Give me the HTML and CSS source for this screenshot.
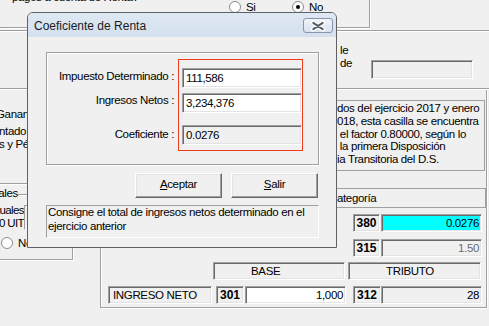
FILE: index.html
```html
<!DOCTYPE html>
<html lang="es">
<head>
<meta charset="utf-8">
<title>Coeficiente de Renta</title>
<link rel="stylesheet" href="styles.css">
</head>
<body>
<div class="screen">
  <div class="q-group">
    <p class="q-text">pagos a cuenta de Renta?</p>
    <label class="radio r-si"><svg class="rb" width="12" height="12" viewBox="0 0 12 12"><circle cx="6" cy="6" r="5.5" class="rb-ring"/></svg><span>Si</span></label>
    <label class="radio r-no"><svg class="rb" width="12" height="12" viewBox="0 0 12 12"><circle cx="6" cy="6" r="5.5" class="rb-ring"/><circle cx="6" cy="6" r="2" class="rb-dot"/></svg><span>No</span></label>
  </div>

  <div class="panel-a">
    <div class="pa-label">le<br>de</div>
    <div class="pa-field sunk"></div>
  </div>

  <div class="lower">
    <div class="left-col">
      <p class="lc-first">Ganancias</p>
      <p class="lc-second">ntado<br>s y Pérdidas</p>
      <div class="lc-sep"></div>
      <div class="lc-group">
        <div class="lc-cap"><span>Datos Adicionales</span></div>
        <div class="lc-row">
          <div class="lc-lbl"><span>Ventas anuales</span><span>mayores a 1700 UIT</span></div>
          <div class="lc-field"></div>
        </div>
        <label class="lc-radio"><svg class="rb" width="12" height="12" viewBox="0 0 12 12"><circle cx="6" cy="6" r="5.5" class="rb-ring"/></svg><span>No</span></label>
      </div>
    </div>

    <div class="cat-group">
      <div class="info-box">dos del ejercicio 2017 y enero<br>018, esta casilla se encuentra<br>&nbsp;el factor 0.80000, según lo<br>&nbsp;la primera Disposición<br>ia Transitoria del D.S.</div>
      <div class="cat-head">Categoría</div>
      <div class="cg-row r1">
        <div class="code sunk c-w27">380</div>
        <div class="val sunk v-cyan">0.0276</div>
      </div>
      <div class="cg-row r2">
        <div class="code sunk c-w27">315</div>
        <div class="val sunk v-dis">1.50</div>
      </div>
      <div class="cg-row r3">
        <div class="colhead sunk h-base">BASE</div>
        <div class="colhead sunk h-trib">TRIBUTO</div>
      </div>
      <div class="cg-row r4">
        <div class="rowlbl sunk">INGRESO NETO</div>
        <div class="code sunk c-301">301</div>
        <div class="val sunk v-white">1,000</div>
        <div class="code sunk c-312">312</div>
        <div class="val sunk v-gray">28</div>
      </div>
    </div>
  </div>

  <div class="dialog">
    <div class="dlg-title">
      <h1>Coeficiente de Renta</h1>
      <div class="dlg-close">
        <svg width="28" height="13" viewBox="0 0 28 13"><path d="M9 3.5 L19 10.5 M19 3.5 L9 10.5" stroke="#ffffff" stroke-width="4.2" stroke-linecap="round" fill="none"/><path d="M9.3 3.8 L18.7 10.2 M18.7 3.8 L9.3 10.2" stroke="#565c66" stroke-width="2" stroke-linecap="round" fill="none"/></svg>
      </div>
    </div>
    <div class="dlg-body">
      <div class="dlg-panel">
        <div class="dlg-labels">
          <span class="l1">Impuesto Determinado :</span>
          <span class="l2">Ingresos Netos :</span>
          <span class="l3">Coeficiente :</span>
        </div>
        <div class="dlg-red">
          <div class="dlg-input sunk">111,586</div>
          <div class="dlg-input sunk i2">3,234,376</div>
          <div class="dlg-input sunk i3">0.0276</div>
        </div>
      </div>
      <div class="dlg-buttons">
        <div class="btn"><u>A</u>ceptar</div>
        <div class="btn"><u>S</u>alir</div>
      </div>
      <div class="dlg-help">Consigne el total de ingresos netos determinado en el<br>ejercicio anterior</div>
    </div>
  </div>
</div>
</body>
</html>
```

FILE: styles.css
```css
* { box-sizing: border-box; }
html, body { margin: 0; padding: 0; }
body {
  background: #f0f0f0;
  font-family: "Liberation Sans", Arial, sans-serif;
  font-size: 11.5px;
  letter-spacing: -0.35px;
  color: #000;
}
p { margin: 0; }

.screen {
  position: relative;
  width: 489px;
  height: 326px;
  overflow: hidden;
  background: #f0f0f0;
}

/* shared classic sunken field edge */
.sunk {
  border: 1px solid;
  border-color: #a0a0a0 #ffffff #ffffff #a0a0a0;
  box-shadow: inset 1px 1px 0 #696969, inset -1px -1px 0 #e3e3e3;
}

.rb-ring { fill: #ffffff; stroke: #8a8a8a; stroke-width: 1; }
.rb-dot { fill: #000; }

/* top group */
.q-group {
  display: flex;
  align-items: flex-start;
  width: 370px;
  height: 28px;
  border-right: 1px solid #a0a0a0;
  border-bottom: 1px solid #a0a0a0;
  box-shadow: 1px 1px 0 #fff;
}
.q-text {
  flex: none;
  width: 229px;
  margin-top: -10px;
  padding-left: 12px;
  line-height: 15px;
  white-space: nowrap;
}
.radio {
  flex: none;
  display: flex;
  align-items: center;
  gap: 5px;
  height: 12px;
  margin-top: 1px;
  line-height: 15px;
  white-space: nowrap;
}
.r-si { width: 63px; }

/* second band */
.panel-a {
  display: flex;
  align-items: flex-start;
  margin-top: 2px;
  height: 60px;
  border-top: 1px solid #a0a0a0;
  border-bottom: 1px solid #fff;
  box-shadow: inset 0 1px 0 #fff, inset 0 -1px 0 #a0a0a0;
}
.pa-label {
  flex: none;
  margin: 13px 0 0 340px;
  width: 31px;
  line-height: 13px;
}
.pa-field {
  flex: none;
  margin-top: 29px;
  width: 102px;
  height: 19px;
  background: #f0f0f0;
}

/* lower area */
.lower {
  display: flex;
  align-items: flex-start;
  height: 236px;
}
.left-col {
  flex: none;
  width: 100px;
}
.lc-first {
  margin: 18px 0 0 -4px;
  line-height: 13px;
  white-space: nowrap;
}
.lc-second {
  margin: 4px 0 0 -1px;
  line-height: 13px;
  white-space: nowrap;
}
.lc-sep {
  margin-top: 32px;
  height: 2px;
  border-top: 1px solid #a0a0a0;
  border-bottom: 1px solid #fff;
}
.lc-group {
  margin: 9px 0 0 -30px;
  width: 103px;
  height: 66px;
  border: 1px solid #a0a0a0;
  box-shadow: inset 1px 1px 0 #fff, 1px 1px 0 #fff;
}
.lc-cap {
  display: flex;
  justify-content: flex-end;
  width: 47px;
  margin-top: -9px;
  line-height: 15px;
  background: #f0f0f0;
  white-space: nowrap;
}
.lc-row {
  display: flex;
  align-items: flex-start;
  margin-top: 3px;
}
.lc-lbl {
  flex: none;
  display: flex;
  flex-direction: column;
  align-items: flex-end;
  width: 53px;
  line-height: 13px;
  letter-spacing: -0.6px;
  white-space: nowrap;
}
.lc-field {
  flex: none;
  margin-top: 1px;
  width: 44px;
  height: 25px;
  border: 1px solid;
  border-color: #a0a0a0 #fff #fff #a0a0a0;
}
.lc-radio {
  display: flex;
  align-items: center;
  gap: 5px;
  height: 12px;
  margin: 7px 0 0 30px;
  line-height: 15px;
  white-space: nowrap;
}

.cat-group {
  flex: none;
  width: 387px;
  height: 218px;
  border: 1px solid #a0a0a0;
  border-top: 0;
  box-shadow: inset 1px 0 0 #fff, 1px 1px 0 #fff;
}
.info-box {
  margin: 10px 0 0 229px;
  width: 155px;
  height: 71px;
  border: 1px solid #a0a0a0;
  padding: 1px 0 0 6px;
  line-height: 12.75px;
  white-space: nowrap;
  overflow: hidden;
}
.cat-head {
  margin: 17px 0 0 229px;
  width: 156px;
  height: 20px;
  border: 1px solid #a0a0a0;
  line-height: 18px;
  text-indent: -2px;
  white-space: nowrap;
  overflow: hidden;
}
.cg-row {
  display: flex;
  align-items: flex-start;
  height: 18px;
}
.r1 { margin-top: 6px; }
.r2 { margin-top: 7px; }
.r3 { margin-top: 5px; }
.r4 { margin-top: 6px; }

.cg-row > div {
  flex: none;
  height: 18px;
  line-height: 16px;
  white-space: nowrap;
  overflow: hidden;
}
.code {
  font-size: 12px;
  font-weight: bold;
  letter-spacing: 0;
  text-align: center;
  background: #f0f0f0;
}
.c-w27 { width: 27px; margin-left: 252px; }
.c-301 { width: 28px; margin-left: 4px; }
.c-312 { width: 28px; margin-left: 7px; }
.val {
  width: 101px;
  text-align: right;
  padding-right: 2px;
}
.c-w27 + .val { margin-left: 1px; }
.v-cyan { background: #00ffff; }
.v-dis { background: #f0f0f0; color: #6d6d6d; }
.v-white { background: #fff; margin-left: 1px; }
.v-gray { background: #f0f0f0; }
.colhead {
  padding-left: 37px;
  background: #f0f0f0;
}
.h-base { width: 132px; margin-left: 112px; }
.h-trib { width: 133px; margin-left: 3px; }
.rowlbl {
  width: 104px;
  margin-left: 7px;
  padding-left: 4px;
  background: #f0f0f0;
}

/* dialog overlay */
.dialog {
  position: absolute;
  left: 27px;
  top: 12px;
  width: 310px;
  height: 236px;
  display: flex;
  flex-direction: column;
  border: 1px solid #5e6166;
  border-radius: 6px 6px 0 0;
  background: #f0f0f0;
}
.dlg-title {
  flex: none;
  display: flex;
  align-items: flex-start;
  height: 24px;
  border-radius: 5px 5px 0 0;
  background: linear-gradient(#dfe8f4, #d4e0ee);
}
.dlg-title h1 {
  flex: 1;
  margin: 0;
  padding: 3px 0 0 6px;
  font-size: 12px;
  letter-spacing: 0;
  line-height: 21px;
  font-weight: normal;
  color: #1b1b1b;
}
.dlg-close {
  flex: none;
  display: flex;
  align-items: center;
  justify-content: center;
  margin: 5px 3px 0 0;
  width: 30px;
  height: 15px;
  border: 1px solid #8695ab;
  border-radius: 3px;
  background: linear-gradient(#f1f4f9, #d9e2ee);
}
.dlg-body {
  padding: 15px 0 0 18px;
}
.dlg-panel {
  display: flex;
  align-items: flex-start;
  width: 273px;
  height: 113px;
  border: 1px solid #a0a0a0;
  box-shadow: inset 1px 1px 0 #fff, 1px 1px 0 #fff;
}
.dlg-labels {
  flex: none;
  display: flex;
  flex-direction: column;
  align-items: flex-end;
  width: 127px;
  margin-top: 16px;
  line-height: 15px;
  white-space: nowrap;
}
.dlg-labels .l2 { margin-top: 9px; }
.dlg-labels .l3 { margin-top: 19px; }
.dlg-red {
  flex: none;
  margin: 6px 0 0 4px;
  width: 125px;
  height: 92px;
  border: 1px solid #f03c1e;
  padding: 8px 0 0 3px;
}
.dlg-input {
  width: 120px;
  height: 20px;
  padding: 1px 3px;
  line-height: 17px;
  background: #fff;
  white-space: nowrap;
  overflow: hidden;
}
.dlg-input.i2 { margin-top: 5px; }
.dlg-input.i3 { margin-top: 12px; background: #f0f0f0; }

.dlg-buttons {
  display: flex;
  justify-content: flex-end;
  gap: 9px;
  width: 272px;
  margin-top: 8px;
}
.btn {
  width: 87px;
  height: 25px;
  border: 1px solid;
  border-color: #fff #696969 #696969 #fff;
  box-shadow: inset -1px -1px 0 #a0a0a0, inset 1px 1px 0 #e3e3e3;
  padding-bottom: 2px;
  line-height: 21px;
  text-align: center;
  background: #f0f0f0;
}
.dlg-help {
  margin-top: 7px;
  width: 273px;
  height: 33px;
  border: 1px solid;
  border-color: #a0a0a0 #fff #fff #a0a0a0;
  padding-left: 1px;
  line-height: 13.5px;
  white-space: nowrap;
  overflow: hidden;
}
```
